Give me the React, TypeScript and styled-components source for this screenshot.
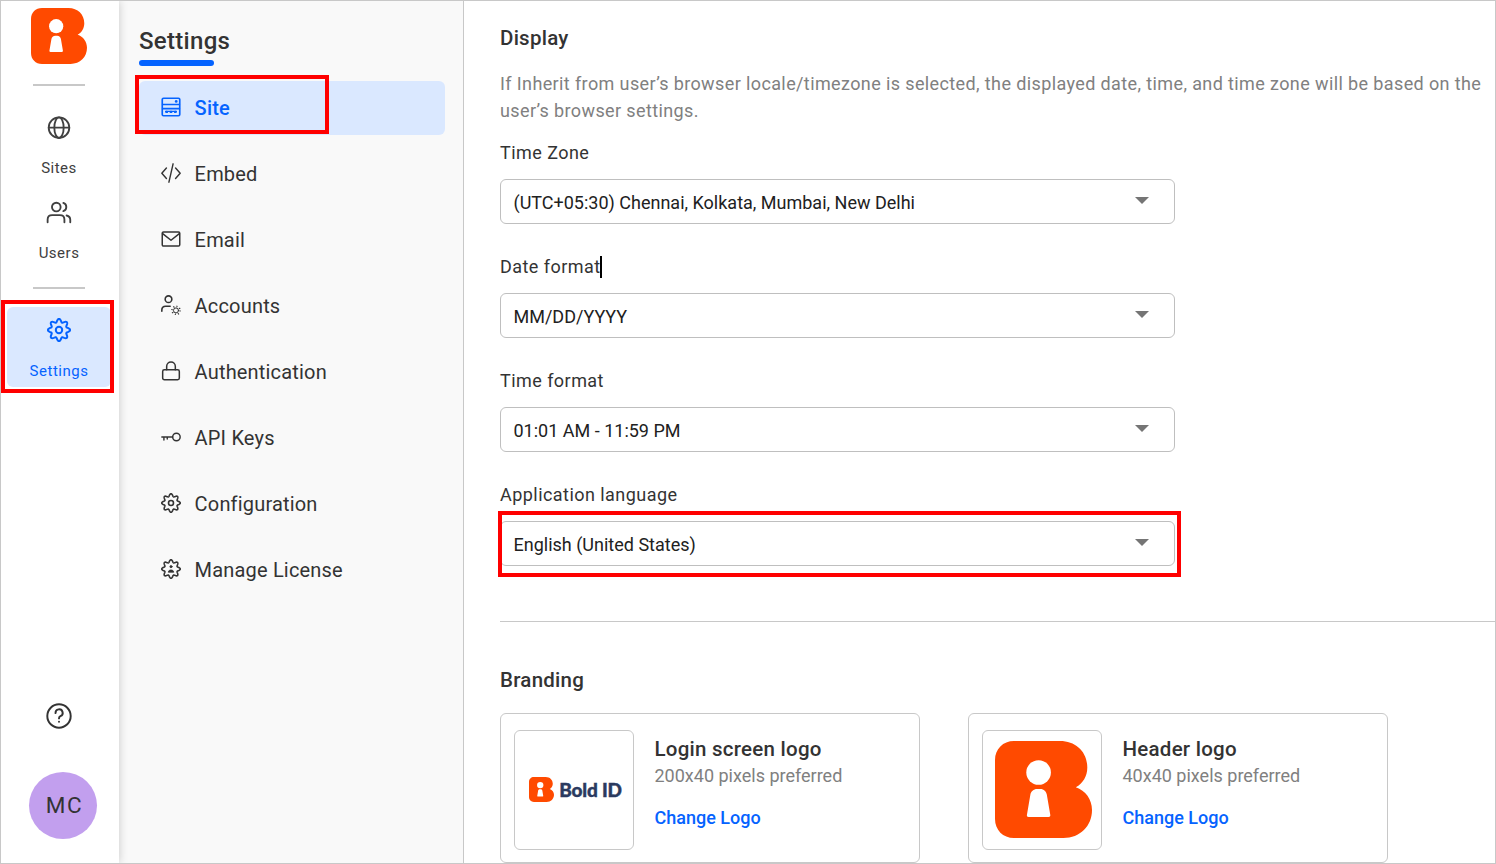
import React from "react";
import styled, { createGlobalStyle, css } from "styled-components";

const Global = createGlobalStyle`
  *, *::before, *::after { box-sizing: border-box; }
  body { margin: 0; background: #fff; font-family: Roboto, "Liberation Sans", sans-serif; color: #333; }
  h1, h2, h3, p { margin: 0; }
  svg { display: block; flex: none; }
`;

const BLUE = "#0563ff";
const TINT = "#dae8ff";
const LINE = "#c8c8c8";

const Frame = styled.div`
  display: flex;
  width: 1496px;
  height: 864px;
  border: 1px solid ${LINE};
  overflow: hidden;
`;

const Highlight = styled.span<{ $t: number; $r: number; $b: number; $l: number }>`
  position: absolute;
  top: ${(p) => p.$t}px;
  right: ${(p) => p.$r}px;
  bottom: ${(p) => p.$b}px;
  left: ${(p) => p.$l}px;
  border: 4px solid #f00;
  pointer-events: none;
`;

const Rail = styled.nav`
  position: relative;
  z-index: 1;
  display: flex;
  flex-direction: column;
  align-items: center;
  flex: none;
  width: 118px;
  padding: 7px 2px 24px 0;
  background: #fff;
  box-shadow: 0 0 9px rgba(0, 0, 0, 0.2);
`;

const RailRule = styled.hr<{ $top: number }>`
  flex: none;
  width: 52px;
  height: 2px;
  margin: ${(p) => p.$top}px 0 0;
  border: 0;
  background: ${LINE};
`;

const RailGroup = styled.div`
  margin-top: 12px;
`;

const RailItem = styled.a<{ $active?: boolean }>`
  position: relative;
  display: flex;
  flex-direction: column;
  align-items: center;
  justify-content: space-between;
  width: 104px;
  height: 85px;
  padding: 17px 0 5px;
  font-size: 15px;
  line-height: 20px;
  letter-spacing: 0.5px;
  color: #404040;
  ${(p) =>
    p.$active &&
    css`
      height: 80px;
      margin-top: 18px;
      padding: 11px 0 6px;
      border-radius: 6px;
      background: ${TINT};
      color: ${BLUE};
    `}
`;

const RailFoot = styled.div`
  display: flex;
  flex-direction: column;
  align-items: center;
  gap: 43px;
  margin-top: auto;
`;

const Avatar = styled.div`
  display: grid;
  place-items: center;
  width: 68px;
  height: 67px;
  margin-left: 8px;
  padding: 0 0 2px 3px;
  border-radius: 50%;
  background: #c29fee;
  font-size: 22.5px;
  letter-spacing: 1.6px;
`;

const Side = styled.aside`
  display: flex;
  flex-direction: column;
  flex: none;
  width: 345px;
  padding: 24px 18px 0 20px;
  border-right: 1px solid ${LINE};
  background: #f9f9f9;
`;

const SideTitle = styled.h1`
  font-size: 24px;
  line-height: 32px;
  font-weight: 500;
  letter-spacing: 0.3px;
  &::after {
    content: "";
    display: block;
    width: 75px;
    height: 6px;
    margin-top: 3px;
    border-radius: 3px;
    background: ${BLUE};
  }
`;

const SideList = styled.div`
  display: flex;
  flex-direction: column;
  gap: 12px;
  margin-top: 15px;
`;

const SideItem = styled.a<{ $active?: boolean }>`
  position: relative;
  display: flex;
  align-items: center;
  gap: 13.6px;
  height: 54px;
  padding: 0 22px;
  border-radius: 6px;
  font-size: 20px;
  line-height: 28px;
  letter-spacing: 0.18px;
  svg { margin-bottom: 1.4px; }
  ${(p) =>
    p.$active &&
    css`
      background: ${TINT};
      color: ${BLUE};
      font-weight: 500;
    `}
`;

const Main = styled.main`
  flex: 1;
  min-width: 0;
  padding: 23px 0 0 36px;
`;

const SectionTitle = styled.h2`
  font-size: 20.5px;
  line-height: 28px;
  font-weight: 500;
  letter-spacing: 0.25px;
`;

const Note = styled.p`
  margin-top: 18px;
  font-size: 18px;
  line-height: 27px;
  letter-spacing: 0.385px;
  color: #808080;
`;

const Fields = styled.div`
  display: flex;
  flex-direction: column;
  gap: 30px;
  width: 675px;
  margin-top: 16px;
`;

const Field = styled.div`
  display: flex;
  flex-direction: column;
  gap: 15px;
`;

const Label = styled.label`
  display: flex;
  align-items: center;
  height: 24px;
  font-size: 18px;
  letter-spacing: 0.45px;
`;

const Caret = styled.i`
  width: 2px;
  height: 22px;
  margin: 1px 0 0 -1px;
  background: #000;
`;

const Select = styled.div`
  position: relative;
  display: flex;
  align-items: center;
  justify-content: space-between;
  height: 45px;
  padding: 1px 25px 0 12.5px;
  border: 1px solid #bfbfbf;
  border-radius: 6px;
  font-size: 18px;
  color: #212121;
  svg { margin-top: -3px; }
`;

const Divider = styled.hr`
  height: 1px;
  margin: 55px 0 44px;
  border: 0;
  background: ${LINE};
`;

const Cards = styled.div`
  display: flex;
  gap: 48px;
  margin-top: 19px;
`;

const Card = styled.section`
  display: flex;
  gap: 20.5px;
  width: 420px;
  height: 150px;
  padding: 16px 13px;
  border: 1px solid ${LINE};
  border-radius: 6px;
`;

const Preview = styled.div`
  display: flex;
  align-items: center;
  justify-content: center;
  gap: 5px;
  flex: none;
  width: 120px;
  height: 120px;
  padding: 0 0 1px 3px;
  border: 1px solid ${LINE};
  border-radius: 6px;
`;

const Wordmark = styled.span`
  font-family: Lato, sans-serif;
  font-weight: 900;
  font-size: 19px;
  letter-spacing: -0.2px;
  white-space: nowrap;
  color: #2b3a5f;
  -webkit-text-stroke: 0.4px #2b3a5f;
`;

const CardText = styled.div`
  padding-top: 7px;
`;

const CardTitle = styled.h3`
  font-size: 20.5px;
  line-height: 25px;
  font-weight: 500;
  letter-spacing: 0.25px;
`;

const CardHint = styled.p`
  font-size: 18px;
  line-height: 27px;
  color: #808080;
`;

const CardLink = styled.a`
  display: block;
  margin-top: 15px;
  font-size: 18px;
  line-height: 27px;
  font-weight: 500;
  color: ${BLUE};
`;

const Logo = ({ size }: { size: number }) => (
  <svg width={size} height={size} viewBox="0 0 97 97">
    <path
      fill="#ff4a00"
      d="M19 0H65C81 0 92.3 11 92.3 26.5C92.3 35 88 42.5 80.8 46.3C90.5 49.5 97 58.5 97 69C97 85 85 97 68.5 97H19C8 97 0 89 0 78V19C0 8 8 0 19 0Z"
    />
    <circle cx="43.6" cy="31.5" r="12.3" fill="#fff" />
    <path
      fill="#fff"
      d="M42.300 48H45.300C49 48 51.300 50.500 51.800 53.500L55.300 74C55.500 75.200 54.800 76 53.600 76H33.600C32.400 76 31.700 75.200 31.900 74L35.400 53.500C35.900 50.500 38.400 48 42.300 48Z"
    />
  </svg>
);

type IconProps = { size?: number; w?: number; children: React.ReactNode };
const Icon = ({ size = 20, w = 1.5, children }: IconProps) => (
  <svg
    width={size}
    height={size}
    viewBox="0 0 24 24"
    fill="none"
    stroke="currentColor"
    strokeWidth={w}
    strokeLinecap="round"
    strokeLinejoin="round"
  >
    {children}
  </svg>
);

const gearOutline = () => {
  const pts: string[] = [];
  const teeth = 8;
  const steps = 128;
  for (let i = 0; i < steps; i++) {
    const a = (i / steps) * Math.PI * 2;
    const r = 9.5 + 1.6 * Math.cos(a * teeth);
    pts.push(`${(12 + r * Math.cos(a)).toFixed(2)} ${(12 + r * Math.sin(a)).toFixed(2)}`);
  }
  return `M${pts.join("L")}Z`;
};
const GEAR = gearOutline();

const icons = {
  site: (
    <Icon w={2}>
      <rect x="1.500" y="1.500" width="21" height="21" rx="1.500" />
      <path d="M2 9h20M2 14h20" />
      <path d="M5.500 17.300h13" strokeWidth="1.400" />
      <path d="M6.500 17.900h.6M11.700 17.900h.6M16.900 17.900h.6" strokeWidth="2.800" />
      <path d="M18.200 5.300h.1" strokeWidth="3.200" />
    </Icon>
  ),
  embed: (
    <Icon w={1.7}>
      <path d="M6.500 6L1 12.200L6.500 18.500M17.500 6L23 12.200L17.500 18.500M14.500 1L9.500 23" />
    </Icon>
  ),
  email: (
    <Icon w={1.8}>
      <rect x="1.500" y="3.500" width="21" height="17" rx="1.500" />
      <path d="M2 5.500L12 13.500L22 5.500" />
    </Icon>
  ),
  accounts: (
    <Icon w={1.9}>
      <circle cx="9" cy="5" r="4" />
      <path d="M1 19.500V18C1 15.200 3 13.500 5.600 13.500H11" />
      <circle cx="18" cy="18.500" r="3" strokeWidth="1.200" />
      <circle cx="18" cy="18.500" r="4.800" strokeWidth="2" strokeDasharray="1.200 2.570" strokeLinecap="butt" />
    </Icon>
  ),
  lock: (
    <Icon w={1.8}>
      <rect x="2" y="10.500" width="20" height="12" rx="2" />
      <path d="M6.800 10.500V6.500A5.200 5.200 0 0 1 17.200 6.500V10.500" />
    </Icon>
  ),
  key: (
    <Icon w={1.7}>
      <circle cx="18.500" cy="12" r="4.500" />
      <path d="M1 12H14M3.500 12V15.500M7.500 12V14.500" />
    </Icon>
  ),
  config: (
    <Icon w={1.9}>
      <path d={GEAR} />
      <circle cx="12" cy="12" r="3" />
    </Icon>
  ),
  license: (
    <Icon w={1.9}>
      <path d={GEAR} />
      <circle cx="12" cy="9.200" r="1.300" fill="currentColor" strokeWidth="1" />
      <path d="M8.800 15.500C9 13.700 10.300 13.200 12 13.200S15 13.700 15.200 15.500Z" fill="currentColor" strokeWidth="1" />
    </Icon>
  ),
};

const menu: [keyof typeof icons, string][] = [
  ["site", "Site"],
  ["embed", "Embed"],
  ["email", "Email"],
  ["accounts", "Accounts"],
  ["lock", "Authentication"],
  ["key", "API Keys"],
  ["config", "Configuration"],
  ["license", "Manage License"],
];

const fields = [
  { label: "Time Zone", value: "(UTC+05:30) Chennai, Kolkata, Mumbai, New Delhi" },
  { label: "Date format", value: "MM/DD/YYYY", caret: true },
  { label: "Time format", value: "01:01 AM - 11:59 PM" },
  { label: "Application language", value: "English (United States)", marked: true },
];

export default function App() {
  return (
    <>
      <Global />
      <Frame>
        <Rail>
          <Logo size={56} />
          <RailRule $top={20} />
          <RailGroup>
            <RailItem>
              <Icon size={26} w={1.7}>
                <circle cx="12" cy="11.700" r="9.500" />
                <ellipse cx="12" cy="11.700" rx="4.300" ry="9.500" />
                <path d="M2.500 11.700h19" />
              </Icon>
              Sites
            </RailItem>
            <RailItem>
              <Icon size={26} w={1.7}>
                <circle cx="9.500" cy="6.500" r="4" />
                <path d="M1.500 20.500V18C1.500 15.500 3.300 14 5.700 14H12.800C15.200 14 17 15.500 17 18V20.500M16 2.700A4 4 0 0 1 16 10.300M19 14.300C21 14.800 22.400 16.300 22.400 18.300V20.500" />
              </Icon>
              Users
            </RailItem>
          </RailGroup>
          <RailRule $top={19} />
          <RailItem $active>
            <Icon size={24} w={2}>
              <path d={GEAR} />
              <circle cx="12" cy="12" r="3.200" />
            </Icon>
            Settings
            <Highlight $t={-7} $r={-3} $b={-6} $l={-6} />
          </RailItem>
          <RailFoot>
            <Icon size={26} w={1.8}>
              <circle cx="12" cy="12" r="10.800" />
              <path d="M8.800 9.300A3.300 3.300 0 1 1 13.300 12.200C12.400 12.600 12 13.200 12 14.200" />
              <path d="M12 17.300h.01" />
            </Icon>
            <Avatar>MC</Avatar>
          </RailFoot>
        </Rail>
        <Side>
          <SideTitle>Settings</SideTitle>
          <SideList>
            {menu.map(([icon, label], i) => (
              <SideItem key={label} $active={i === 0}>
                {icons[icon]}
                {label}
                {i === 0 && <Highlight $t={-6} $r={116} $b={1} $l={-4} />}
              </SideItem>
            ))}
          </SideList>
        </Side>
        <Main>
          <SectionTitle>Display</SectionTitle>
          <Note>
            If Inherit from user’s browser locale/timezone is selected, the displayed date, time, and time zone will be
            based on the user’s browser settings.
          </Note>
          <Fields>
            {fields.map((f) => (
              <Field key={f.label}>
                <Label>
                  {f.label}
                  {f.caret && <Caret />}
                </Label>
                <Select>
                  {f.value}
                  <svg width="14" height="7" viewBox="0 0 14 7">
                    <path d="M0 0H14L7 7Z" fill="#757575" />
                  </svg>
                  {f.marked && <Highlight $t={-11} $r={-7} $b={-12} $l={-3} />}
                </Select>
              </Field>
            ))}
          </Fields>
          <Divider />
          <SectionTitle>Branding</SectionTitle>
          <Cards>
            <Card>
              <Preview>
                <Logo size={25} />
                <Wordmark>Bold ID</Wordmark>
              </Preview>
              <CardText>
                <CardTitle>Login screen logo</CardTitle>
                <CardHint>200x40 pixels preferred</CardHint>
                <CardLink>Change Logo</CardLink>
              </CardText>
            </Card>
            <Card>
              <Preview>
                <Logo size={97} />
              </Preview>
              <CardText>
                <CardTitle>Header logo</CardTitle>
                <CardHint>40x40 pixels preferred</CardHint>
                <CardLink>Change Logo</CardLink>
              </CardText>
            </Card>
          </Cards>
        </Main>
      </Frame>
    </>
  );
}
